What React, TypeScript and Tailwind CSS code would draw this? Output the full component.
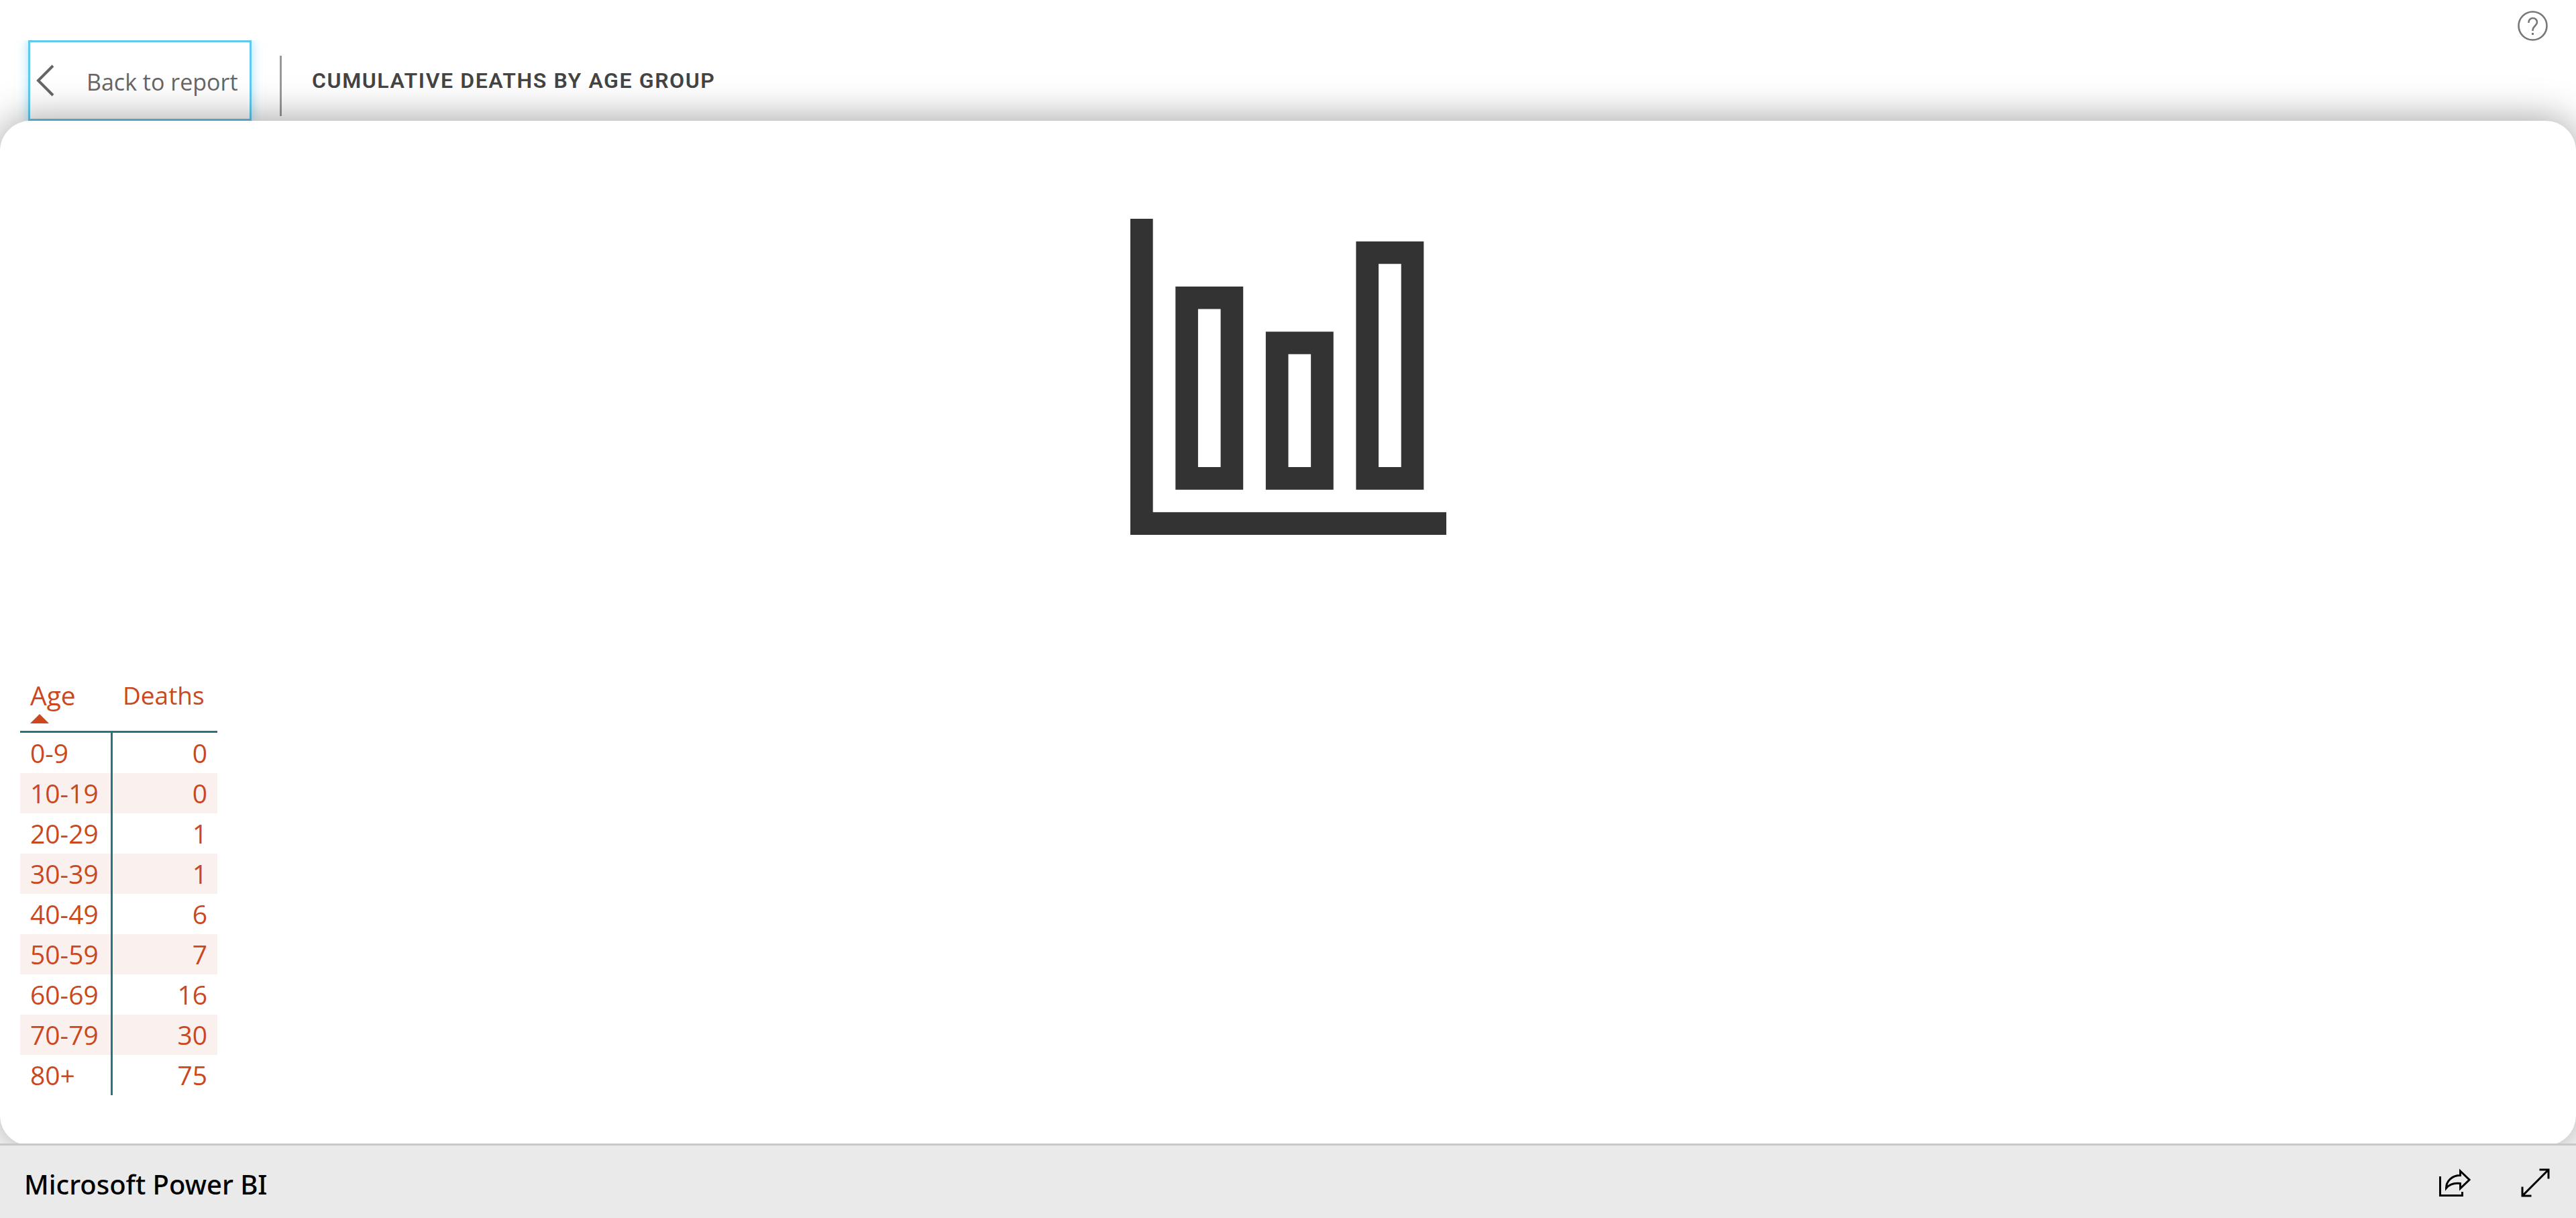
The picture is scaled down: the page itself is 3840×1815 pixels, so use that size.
const rows: [string, number][] = [
  ["0-9", 0],
  ["10-19", 0],
  ["20-29", 1],
  ["30-39", 1],
  ["40-49", 6],
  ["50-59", 7],
  ["60-69", 16],
  ["70-79", 30],
  ["80+", 75],
];

function Header() {
  return (
    <header className="flex h-[180px] shrink-0 justify-between">
      <div className="mt-[60px] flex overflow-hidden pl-[42px]">
        <button
          type="button"
          className="flex h-[120px] w-[333px] items-center border-[3px] border-[#62c9ee] bg-white pl-[9px] text-[34px] text-[#666] shadow-[0_0_15px_rgba(98,201,238,0.6)]"
        >
          <svg viewBox="0 0 27 48" className="h-12 w-[27px]" fill="none" stroke="currentColor" strokeWidth="4" aria-hidden="true">
            <path d="M25 2 3 24l22 22" />
          </svg>
          <span className="ml-[48px] mt-[5px] whitespace-nowrap">Back to report</span>
        </button>
        <div className="ml-[42px] mt-[23px] h-[90px] w-[3px] bg-[#999]" />
        <h1 className="ml-[45px] mt-[40px] whitespace-nowrap font-['Roboto',sans-serif] text-[32px] leading-[40px] font-semibold tracking-wider text-[#444]">
          CUMULATIVE DEATHS BY AGE GROUP
        </h1>
      </div>
      <button type="button" aria-label="Help" className="mr-[42px] mt-[16px] h-[45px] w-[45px] text-[#777]">
        <svg viewBox="0 0 45 45" className="h-full w-full" fill="none" stroke="currentColor" strokeWidth="2.6" aria-hidden="true">
          <circle cx="22.5" cy="22.5" r="21" />
          <path d="M16.5 18v-1a6 5.7 0 0 1 12.500 0c0 5.500-6.500 6-6.500 11.500V30" />
          <path d="M22.500 33v3" strokeWidth="3" />
        </svg>
      </button>
    </header>
  );
}

function ChartIcon() {
  return (
    <svg viewBox="0 0 14 14" className="h-[471px] w-[471px]" fill="#333" fillRule="evenodd" role="img" aria-label="Column chart">
      <path d="M0 0h1v13h13v1H0z" />
      <path d="M2 3h3v9H2zM3 4v7h1V4z" />
      <path d="M6 5h3v7H6zM7 6v5h1V6z" />
      <path d="M10 1h3v11h-3zM11 2v9h1V2z" />
    </svg>
  );
}

function DeathsTable() {
  return (
    <table className="w-[294px] table-fixed border-collapse text-[39px] leading-[60px] text-[#cb481e]">
      <colgroup>
        <col className="w-[136px]" />
        <col />
      </colgroup>
      <thead>
        <tr className="border-b-[3px] border-[#257681]">
          <th scope="col" aria-sort="ascending" className="h-[80px] px-[15px] pb-[9px] text-left align-top font-normal">
            <span className="block leading-[50px]">Age</span>
            <svg viewBox="0 0 28 14" className="mt-[3px] h-[14px] w-[28px]" fill="currentColor" aria-hidden="true">
              <path d="M0 14 14 0l14 14z" />
            </svg>
          </th>
          <th scope="col" className="px-[17px] text-left align-top text-[37px] leading-[50px] font-normal">
            Deaths
          </th>
        </tr>
      </thead>
      <tbody>
        {rows.map(([age, deaths]) => (
          <tr key={age} className="h-[60px] even:bg-[#faf0ee]">
            <td className="border-r-[3px] border-[#257681] p-0 pl-[15px]">{age}</td>
            <td className="p-0 pr-[15px] text-right">{deaths}</td>
          </tr>
        ))}
      </tbody>
    </table>
  );
}

function Footer() {
  return (
    <footer className="relative flex h-[111px] shrink-0 items-center justify-between border-t-[3px] border-[#c8c8c8] bg-[#eaeaea] pl-[36px] pr-[38px] text-black">
      <span className="mt-[8px] font-['Noto_Sans','Open_Sans',sans-serif] text-[40px] font-medium">Microsoft Power BI</span>
      <div className="mt-[2px] flex items-center gap-[74px]">
        <button type="button" aria-label="Share" className="h-[45px] w-[48px]">
          <svg viewBox="0 0 48 45" className="h-full w-full" fill="none" stroke="currentColor" strokeWidth="3" aria-hidden="true">
            <path d="M2.500 13v28.500h33V36" />
            <path d="M32.500 5 46 18 32.500 31v-7.500c-8-1-16 1-21 7C11.500 20 20 11.500 32.500 11.500z" />
          </svg>
        </button>
        <button type="button" aria-label="Full screen" className="h-[45px] w-[45px]">
          <svg viewBox="0 0 45 45" className="h-full w-full" fill="none" stroke="currentColor" strokeWidth="3" aria-hidden="true">
            <path d="M28.500 3h13.500v13.500M42 3 3 42M3 28.500V42h13.500" />
          </svg>
        </button>
      </div>
    </footer>
  );
}

export default function App() {
  return (
    <div className="flex min-h-screen flex-col overflow-hidden bg-white font-['Open_Sans',sans-serif]">
      <Header />
      <main className="relative -mb-[3px] grid flex-1 grid-rows-2 rounded-[45px] bg-white shadow-[0_0_60px_rgba(0,0,0,0.4)]">
        <section className="flex items-center justify-center">
          <ChartIcon />
        </section>
        <section className="pl-[30px] pt-[67px]">
          <DeathsTable />
        </section>
      </main>
      <Footer />
    </div>
  );
}
